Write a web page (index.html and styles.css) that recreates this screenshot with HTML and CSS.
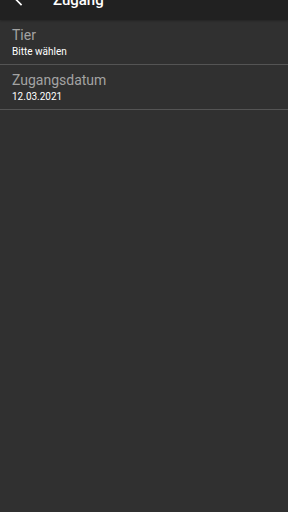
FILE: index.html
```html
<!DOCTYPE html>
<html lang="de">
<head>
    <title>Zugang</title>
    <meta charset="UTF-8">
    <meta name="viewport" content="width=device-width, initial-scale=1">
    <link rel="stylesheet" href="styles.css">
</head>
<body>
    <header class="toolbar">
        <button class="back-btn" aria-label="Zurück">
            <svg viewBox="0 0 24 24" width="20" height="20">
                <path fill="#fff" d="M20 11H7.83l5.59-5.59L12 4l-8 8 8 8 1.41-1.41L7.83 13H20v-2z"/>
            </svg>
        </button>
        <h1 class="title">Zugang</h1>
    </header>

    <!-- Formularfelder -->
    <div class="list">
        <div class="item">
            <div class="item-label">Tier</div>
            <div class="item-value">Bitte wählen</div>
        </div>
        <div class="item">
            <div class="item-label">Zugangsdatum</div>
            <div class="item-value">12.03.2021</div>
        </div>
    </div>
</body>
</html>
```

FILE: styles.css
```css
html, body { height: 100%; }
body { margin: 0; background: #303030; font-family: Roboto, "Liberation Sans", sans-serif; color: #fff; overflow: hidden; }
.toolbar { display: flex; align-items: center; height: 42px; margin-top: -22px; background: #212121; box-shadow: 0 1px 2px rgba(0,0,0,0.25); position: relative; }
.back-btn { display: flex; align-items: center; justify-content: center; width: 20px; height: 20px; margin-left: 11px; padding: 0; background: none; border: none; }
.back-btn svg { display: block; }
.title { margin: 2px 0 0 22px; font-size: 15px; font-weight: 500; line-height: 18px; color: #fff; }
.list { display: flex; flex-direction: column; }
.item { padding: 7px 12px 6px; border-bottom: 1px solid #545454; }
.item-label { font-size: 14px; line-height: 16px; color: #a3a3a3; }
.item-value { margin-top: 3px; font-size: 10px; line-height: 12px; color: #fff; }
```
